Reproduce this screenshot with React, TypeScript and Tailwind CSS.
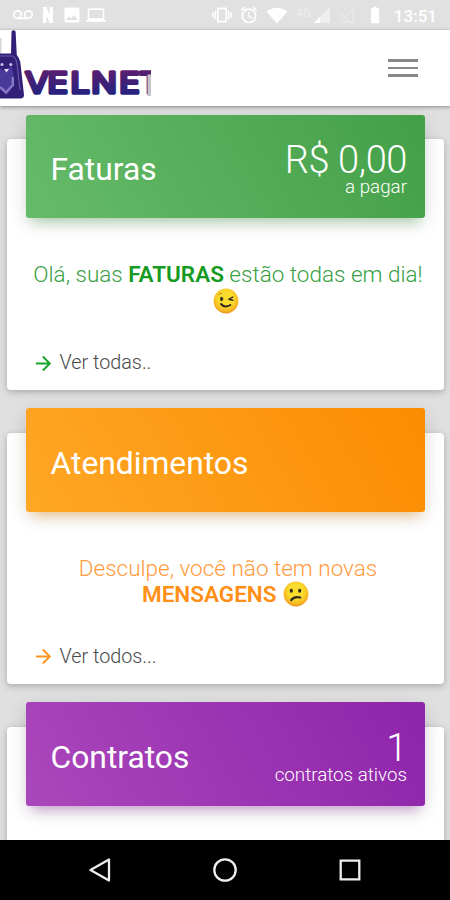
import React from "react";
import { MdAlarm, MdArrowForward, MdBatteryStd, MdImage, MdLaptop, MdVibration, MdVoicemail } from "react-icons/md";

const cards = [
  {
    title: "Faturas",
    value: "R$ 0,00",
    label: "a pagar",
    gradient: "bg-linear-[60deg,#66bb6a,#43a047]",
    shadow: "shadow-[0_5px_20px_rgba(0,0,0,0.12),0_9px_12px_-6px_rgba(76,175,80,0.4)]",
    text: "text-[#38a043]",
    strongText: "text-[#159a22]",
    icon: "text-[#1aa526]",
    before: "Olá, suas ",
    strong: "FATURAS",
    after: " estão todas em dia! ",
    face: "wink",
    link: "Ver todas..",
  },
  {
    title: "Atendimentos",
    gradient: "bg-linear-[60deg,#ffa726,#fb8c00]",
    shadow: "shadow-[0_5px_20px_rgba(0,0,0,0.12),0_9px_12px_-6px_rgba(255,152,0,0.4)]",
    text: "text-[#ff9a3c]",
    strongText: "text-[#ff8f16]",
    icon: "text-[#ff9420]",
    before: "Desculpe, você não tem novas ",
    strong: "MENSAGENS",
    after: " ",
    face: "sad",
    link: "Ver todos...",
  },
  {
    title: "Contratos",
    value: "1",
    label: "contratos ativos",
    gradient: "bg-linear-[60deg,#ab47bc,#8e24aa]",
    shadow: "shadow-[0_5px_20px_rgba(0,0,0,0.12),0_9px_12px_-6px_rgba(156,39,176,0.4)]",
  },
];

function Face({ kind }: { kind?: string }) {
  return (
    <svg viewBox="0 0 26 26" className="ml-px inline-block h-[26px] w-[26px] align-[-5px]">
      <defs>
        <radialGradient id={`face-${kind}`} cx="0.5" cy="0.4" r="0.6">
          <stop offset="0.5" stopColor="#fbdc2c" />
          <stop offset="0.85" stopColor="#f6b422" />
          <stop offset="1" stopColor="#ea9320" />
        </radialGradient>
      </defs>
      <circle cx="13" cy="13" r="12.4" fill={`url(#face-${kind})`} />
      {kind === "wink" ? (
        <g fill="none" stroke="#302b20" strokeLinecap="round" strokeLinejoin="round">
          <ellipse cx="8.6" cy="11" rx="1.3" ry="1.9" fill="#302b20" strokeWidth="0.4" />
          <path d="M5.5 6.8Q7 4.8 9 5.3" stroke="#b8831f" strokeWidth="1" />
          <path d="M19.8 9L15.8 11.3L19.8 12.3" strokeWidth="1.4" />
          <path d="M8 16Q11.5 20.3 17.3 17" strokeWidth="2" />
        </g>
      ) : (
        <g fill="#302b20">
          <ellipse cx="8.3" cy="9.8" rx="1.6" ry="2" />
          <ellipse cx="16.7" cy="9.8" rx="1.6" ry="2" />
          <path d="M8.2 19.2Q11 14.8 17.3 16.5" fill="none" stroke="#302b20" strokeWidth="2.2" strokeLinecap="round" />
        </g>
      )}
    </svg>
  );
}

function Logo() {
  return (
    <svg viewBox="0 0 151 76" className="h-[76px] w-[151px] overflow-hidden" role="img" aria-label="Velnet">
      <defs>
        <linearGradient id="word" x1="0" y1="40" x2="0" y2="64" gradientUnits="userSpaceOnUse">
          <stop offset="0" stopColor="#5b1f70" />
          <stop offset="1" stopColor="#25227f" />
        </linearGradient>
      </defs>
      <path d="M0 8H1.5V22L0 24Z" fill="#d5d5dc" />
      <path d="M11.5 1.5Q13.5-0.8 15.6 1.5L16.8 25Q19.5 28 20.3 32L24 65Q24 68.5 20 68.5H0V23.5H11Z" fill="#322078" />
      <path d="M0 26H12Q16 27 17 34L20 60" fill="none" stroke="#6656a4" strokeWidth="1.2" />
      <path d="M0 38Q4 43 8 38L12 36L14 48V55L7 64L0 59Z" fill="#49399a" />
      <circle cx="2" cy="34.5" r="1.5" fill="#c9c4e8" />
      <circle cx="10.8" cy="34.5" r="1.5" fill="#c9c4e8" />
      <path d="M4 39H9L6.5 42.5Z" fill="#e6e2f5" />
      <path d="M0 57L6 62.5L12.8 55V47" fill="none" stroke="#8679c3" strokeWidth="2.4" />
      <text
        x="21.6 40.7 60.2 77.9 102 119"
        y="63"
        transform="scale(1.17 1)"
        fill="url(#word)"
        stroke="url(#word)"
        strokeWidth="3.4"
        strokeLinejoin="round"
        className="font-['Inter'] text-[29px] font-normal"
      >
        VELNET
      </text>
      <path d="M147.5 44.5H151V66H147.5Z" fill="#c8c2cf" />
    </svg>
  );
}

function StatusBar() {
  return (
    <div className="flex h-[30px] shrink-0 items-center bg-[#e1e1e1] pl-[13px] pr-[13px] text-white">
      <MdVoicemail className="size-5" />
      <svg viewBox="0 0 12 18" className="ml-[9px] h-[18px] w-3">
        <path d="M1 1H4.5L7.5 9V1H11V17H7.5L4.5 9V17H1Z" fill="currentColor" />
      </svg>
      <MdImage className="ml-[8px] size-5" />
      <MdLaptop className="ml-[4px] size-5" />
      <MdVibration className="ml-auto size-5" />
      <MdAlarm className="ml-[7px] size-5" />
      <svg viewBox="0 0 22 17" className="ml-[7px] h-[17px] w-[22px]">
        <path d="M0.5 4.5Q11-3 21.5 4.5L11 16.5Z" fill="currentColor" />
      </svg>
      <span className="ml-2 self-start pt-[6px] text-[12px] leading-[14px] text-[#ededed]">4G</span>
      <svg viewBox="0 0 18 17" className="ml-[2px] h-[17px] w-[18px]">
        <path d="M17 0V16H1Z" fill="#efefef" />
        <path d="M7 10V16H1Z" fill="#fff" />
      </svg>
      <svg viewBox="0 0 18 17" className="ml-[6px] h-[17px] w-[18px]">
        <path d="M16 2V15H3ZM1 4L14 16" fill="none" stroke="#eeeeee" />
      </svg>
      <MdBatteryStd className="ml-[10px] size-5" />
      <span className="ml-[9px] pt-[2px] text-[17px] font-medium leading-none">13:51</span>
    </div>
  );
}

export default function App() {
  return (
    <div className="flex h-[900px] w-[450px] flex-col overflow-hidden bg-[#e0e0e0] font-['Roboto',sans-serif]">
      <StatusBar />
      <header className="z-10 flex h-[76px] shrink-0 items-center justify-between bg-white pr-8 shadow-[0_1px_4px_rgba(0,0,0,0.4)]">
        <Logo />
        <div className="flex w-[30px] flex-col gap-[5px]">
          <div className="h-[2.5px] bg-[#888]" />
          <div className="h-[2.5px] bg-[#888]" />
          <div className="h-[2.5px] bg-[#888]" />
        </div>
      </header>

      <main className="flex min-h-0 flex-1 flex-col gap-[42.5px] overflow-hidden pl-[7px] pr-[6px] pt-[33px]">
        {cards.map((card) => (
          <section
            key={card.title}
            className="flex h-[251.3px] shrink-0 flex-col rounded-[4px] bg-white px-[18.5px] shadow-[0_2px_7px_rgba(0,0,0,0.25)]"
          >
            <div
              className={`-mt-[24.5px] flex h-[103.5px] w-[399.5px] shrink-0 items-center justify-between rounded-[3px] pl-[25px] pr-[18px] text-white ${card.gradient} ${card.shadow}`}
            >
              <h2 className="mt-[8px] text-[31.8px] leading-none">{card.title}</h2>
              {card.value && (
                <div className="mt-[5px] text-right font-light">
                  <div className="text-[38px] leading-[38px] tracking-[-0.4px]">{card.value}</div>
                  <div className="text-[18.8px] leading-[17px]">{card.label}</div>
                </div>
              )}
            </div>
            {card.link && (
              <>
                <p className={`mt-[43px] -mx-1 h-[53px] indent-[5px] text-center text-[22.5px] font-light leading-[26.5px] ${card.text}`}>
                  {card.before}
                  <b className={`font-semibold ${card.strongText}`}>{card.strong}</b>
                  {card.after}
                  <Face kind={card.face} />
                </p>
                <a className="mt-[36px] flex items-center gap-[4.5px] pl-[6.5px] text-[19.8px] font-light leading-[26px] text-[#484848]">
                  <MdArrowForward className={`size-[23px] ${card.icon}`} />
                  {card.link}
                </a>
              </>
            )}
          </section>
        ))}
      </main>

      <nav className="z-10 flex h-[60px] shrink-0 items-center justify-around bg-black px-[38px] text-[#eee]">
        <svg viewBox="0 0 26 26" className="size-[26px]" fill="none" stroke="currentColor" strokeWidth="2.3" strokeLinejoin="round">
          <path d="M22 2.5V23.5L3.5 13Z" />
        </svg>
        <svg viewBox="0 0 26 26" className="size-[26px]" fill="none" stroke="currentColor" strokeWidth="2.3">
          <circle cx="13" cy="13" r="10.7" />
        </svg>
        <svg viewBox="0 0 26 26" className="size-[26px]" fill="none" stroke="currentColor" strokeWidth="2.3">
          <path d="M3.7 3.7H22.3V22.3H3.7Z" />
        </svg>
      </nav>
    </div>
  );
}
